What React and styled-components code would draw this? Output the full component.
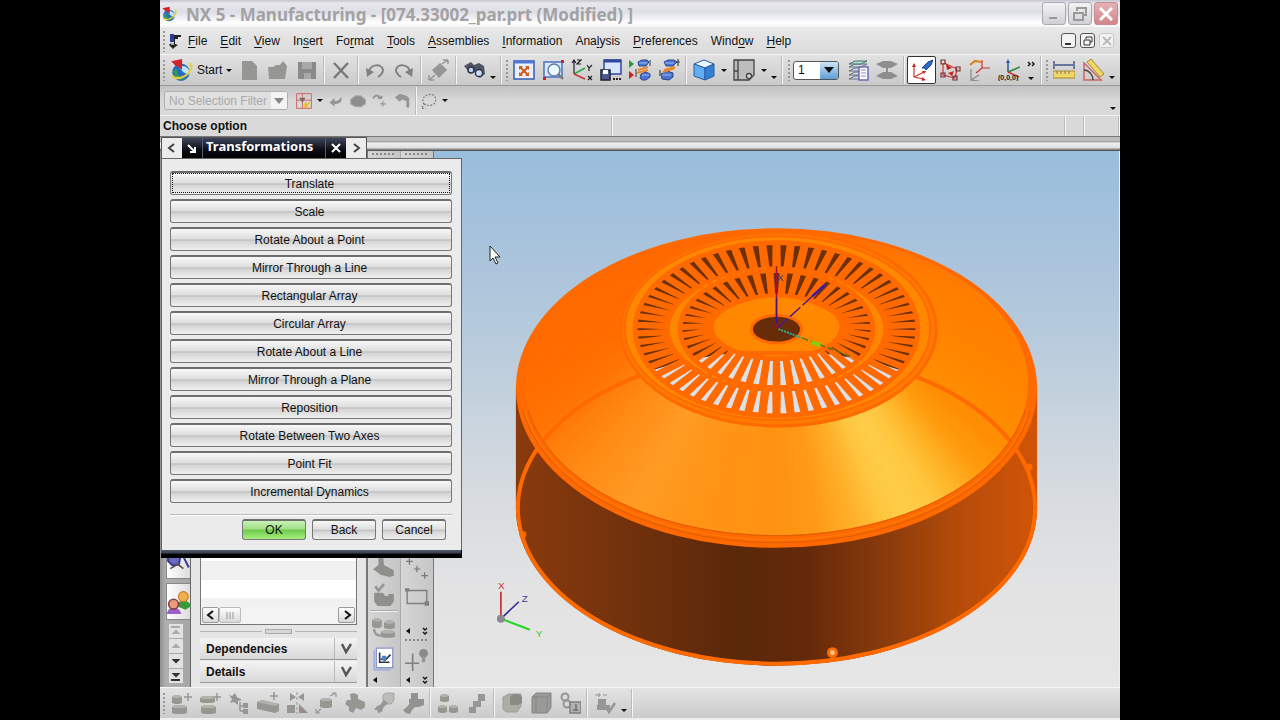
import React from "react";
import styled, { createGlobalStyle, css } from "styled-components";

const GlobalStyle = createGlobalStyle`
  * {
    box-sizing: border-box;
  }

  body {
    margin: 0;
    background: #000;
    font-family: "Liberation Sans", Arial, sans-serif;
    font-size: 12px;
    color: #111;
  }

  button, select {
    font: inherit;
    color: inherit;
    margin: 0;
    padding: 0;
    border: 0;
    background: none;
  }

  svg {
    display: block;
    flex: none;
  }
`;

const Screen = styled.div`
  display: flex;
  justify-content: center;
  height: 100vh;
`;

const Frame = styled.div`
  display: flex;
  flex-direction: column;
  width: 75%;
  background: #e2e2e2;
`;

const TitleBar = styled.header`
  display: flex;
  align-items: center;
  gap: 9px;
  height: 27px;
  padding: 0 2px 0 1px;
  background: linear-gradient(#c4c4d0, #e8e8ee 12%, #dedee6 45%, #fff 85%, #f4f4f6);
`;

const Title = styled.h1`
  flex: 1;
  margin: 0;
  padding-top: 2px;
  font: bold 17px/25px "Noto Sans", "Open Sans", sans-serif;
  color: #a2a2a4;
  white-space: nowrap;
`;

const WindowButtons = styled.div`
  display: flex;
  gap: ${(props) => (props.small ? "4px" : "2px")};
`;

const WindowButton = styled.button`
  display: flex;
  align-items: center;
  justify-content: center;
  width: 24px;
  height: 23px;
  border: 1px solid ${(props) => (props.close ? "#c98c90" : "#a9a9b0")};
  border-radius: 3px;
  color: ${(props) => (props.close ? "#fff" : "#9a9a9a")};
  background: ${(props) =>
    props.close
      ? "linear-gradient(#e3b3b4, #d0868a)"
      : "linear-gradient(#f4f4f6, #d0d0d6)"};
`;

const ChildButton = styled(WindowButton)`
  width: 15px;
  height: 15px;
  border-color: ${(props) => (props.disabled ? "#c8c8c8" : "#555")};
  color: ${(props) => (props.disabled ? "#b8b8b8" : "#333")};
  background: #f3f3f3;
`;

const MenuBar = styled.nav`
  display: flex;
  align-items: center;
  gap: 1px;
  height: 27px;
  padding: 0 6px 0 0;
  background: linear-gradient(#e9e9e9, #dadada);
`;

const MenuItem = styled.button`
  padding: 0 6px;
  line-height: 20px;
  text-underline-offset: 2px;
`;

const Spacer = styled.div`
  flex: 1;
`;

const ToolBar = styled.div`
  display: flex;
  align-items: center;
  height: 32px;
  border-top: 1px solid #f4f4f4;
  border-bottom: 1px solid #9a9a9a;
  background: linear-gradient(#e2e2e2, #c9c9c9);
`;

const Grip = styled.div`
  width: ${(props) => (props.wide ? "8px" : "6px")};
  height: 22px;
  background: radial-gradient(circle at 2px 2px, #999 1px, transparent 1px);
  background-size: 3px 4px;
  background-repeat: repeat-y;
  background-position: 2px 0;
`;

const Separator = styled.div`
  width: ${(props) => (props.narrow ? "5px" : "6px")};
  height: 28px;
  background: linear-gradient(90deg, #bbb 1px, #f6f6f6 1px) 2px 0 / 2px 100% no-repeat;
`;

const ToolButton = styled.button`
  display: flex;
  align-items: center;
  justify-content: center;
  width: 29px;
  height: 28px;
  ${(props) =>
    props.active &&
    css`
      border: 1px solid #333;
      border-radius: 2px;
      background: #fff;
    `}
`;

const StartButton = styled.button`
  display: flex;
  align-items: center;
  gap: 4px;
  width: 66px;
  padding-left: 1px;
`;

const CaretButton = styled.button`
  display: flex;
  align-items: ${(props) => (props.low ? "flex-end" : "center")};
  justify-content: center;
  width: ${(props) => (props.low ? "10px" : "11px")};
  height: ${(props) => (props.low ? "18px" : "28px")};
`;

const ChevronStack = styled.button`
  display: flex;
  flex-direction: column;
  align-items: center;
  gap: 9px;
  width: 15px;
`;

const Triangle = styled.span`
  border: 3px solid transparent;
  border-bottom-width: 0;
  border-top-color: #111;
`;

const LayerSelect = styled.label`
  display: flex;
  width: 46px;
  height: 19px;
  margin: 0 4px 0 2px;
  border: 1px solid #555;
  border-radius: 3px;
  background: #fff;
  overflow: hidden;

  select {
    flex: 1;
    min-width: 0;
    padding-left: 4px;
    appearance: none;
  }
`;

const SelectArrow = styled.span`
  display: flex;
  align-items: center;
  justify-content: center;
  width: 18px;
  background: linear-gradient(#cfe4f5, #5f9fd6);
`;

const FilterSelect = styled(LayerSelect)`
  width: 124px;
  margin: 0 6px 0 4px;
  border-color: #b0b0b0;
  color: #a9a9a9;
  background: #e0e0e0;

  select {
    color: #a9a9a9;
    opacity: 1;
  }

  ${SelectArrow} {
    width: 16px;
    color: #888;
    background: #f4f4f4;
  }
`;

const SelectionBar = styled.div`
  display: flex;
  align-items: center;
  height: 29px;
  padding-right: 2px;
  background: linear-gradient(#c2c2c2, #d8d8d8 50%, #dadada);
`;

const SmallTool = styled(ToolButton)`
  width: ${(props) => props.size || 22}px;
`;

const PromptLine = styled.div`
  display: flex;
  align-items: center;
  height: 21px;
  border-top: 1px solid #f0f0f0;
  background: #dadada;
  font-weight: bold;
`;

const PromptCell = styled.div`
  flex: ${(props) => props.grow || "none"};
  width: ${(props) => props.size || 0}px;
  height: 19px;
  padding-left: 3px;
  line-height: 18px;
  border-right: 1px solid #f8f8f8;
  box-shadow: inset -1px 0 #bbb;
`;

const Divider = styled.div`
  height: 15px;
  border-bottom: 1px solid #555;
  background: linear-gradient(
    #777 1px,
    #bcbcbc 1px,
    #bcbcbc 5px,
    #888 5px,
    #eee 7px,
    #e0e0e0 12px,
    #888 13px
  );
`;

const Workspace = styled.main`
  position: relative;
  display: flex;
  flex: 1;
  min-height: 0;
`;

const ResourceBar = styled.div`
  display: flex;
  flex-direction: column;
  justify-content: flex-end;
  width: 31px;
  padding: 0 0 4px 6px;
  border-right: 1px solid #666;
  background: linear-gradient(90deg, #909090, #b0b0b0 6px, #a6a6a6);
`;

const ResourceTab = styled.button`
  display: flex;
  align-items: center;
  justify-content: center;
  height: 37px;
  margin-bottom: 4px;
  border: 1px solid #888;
  border-right: 0;
  background: linear-gradient(90deg, #fff, #ddd);
`;

const TabScroll = styled.div`
  display: flex;
  flex-direction: column;
  gap: 1px;
  padding-left: 3px;
`;

const TabScrollButton = styled.button`
  display: flex;
  align-items: center;
  justify-content: center;
  width: 14px;
  height: 14px;
  background: #e2e2e2;
  color: ${(props) => (props.disabled ? "#aaa" : "#333")};
`;

const Navigator = styled.section`
  display: flex;
  flex-direction: column;
  justify-content: flex-end;
  width: 177px;
  padding: 0 9px 4px;
  border-right: 2px solid #777;
  background: #e6e6e6;
`;

const TreeBox = styled.div`
  display: flex;
  flex-direction: column;
  justify-content: flex-end;
  height: 120px;
  border: 1px solid #777;
  background: repeating-linear-gradient(#fff 0 18px, #f1f1f1 18px 37px);
`;

const ScrollBar = styled.div`
  display: flex;
  height: 18px;
  padding: 1px;
  background: #f3f3f3;
`;

const ScrollButton = styled.button`
  display: flex;
  align-items: center;
  justify-content: center;
  width: ${(props) => (props.thumb ? "22px" : "17px")};
  border: 1px solid ${(props) => (props.thumb ? "#bbb" : "#999")};
  border-radius: 2px;
  background: linear-gradient(#fff, #d8d8d8);
`;

const Splitter = styled.div`
  display: flex;
  align-items: center;
  height: 13px;

  &::before,
  &::after {
    content: "";
    flex: 1;
    height: 1px;
    background: #b4b4b4;
  }
`;

const SplitterHandle = styled.span`
  width: 27px;
  height: 5px;
  margin: 0 3px;
  border: 1px solid #aaa;
  background: #d6d6d6;
`;

const SectionButton = styled.button`
  display: flex;
  align-items: center;
  height: 22px;
  padding-left: 6px;
  border-bottom: 1px solid #999;
  font-weight: bold;
  background: linear-gradient(#f4f4f4, #d8d8d8);

  svg {
    width: 23px;
    margin-left: auto;
    border-left: 1px solid #bbb;
  }

  & + & {
    margin-top: 1px;
  }
`;

const SideTools = styled.div`
  display: flex;
  flex-direction: column;
  align-items: center;
  width: 33px;
  padding-bottom: 1px;
  border-right: 1px solid ${(props) => (props.last ? "#777" : "#aaa")};
  background: linear-gradient(90deg, #d6d6d6, #c6c6c6);
`;

const Dots = styled.div`
  width: 24px;
  height: 8px;
  background: radial-gradient(circle at 1px 1px, #888 1px, transparent 1px);
  background-size: 4px 3px;
  background-repeat: repeat-x;
  background-position: 0 2px;
`;

const SideButton = styled(ToolButton)`
  width: 30px;
  height: ${(props) => props.tall || 30}px;
`;

const SideRule = styled.div`
  width: 28px;
  height: 2px;
  border-top: 1px solid #aaa;
  background: #f4f4f4;
`;

const SideGap = styled.div`
  height: 14px;
`;

const SideFooter = styled.div`
  display: flex;
  align-items: center;
  justify-content: space-between;
  width: 22px;
  height: 12px;
`;

const Viewport = styled.section`
  flex: 1;
  min-width: 0;
  border-right: 1px solid #eee;
  background: linear-gradient(#99bedd, #a6c2dc 15%, #b4c9dc 32%, #c9d4de 50%, #d8dce0 65%, #e3e3e4 82%, #e6e6e6);

  svg {
    width: 100%;
    height: 100%;
  }
`;

const BottomBar = styled.div`
  display: flex;
  align-items: center;
  height: 33px;
  padding: 1px 0 2px;
  border-top: 1px solid #f6f6f6;
  border-bottom: 2px solid #efefef;
  background: linear-gradient(#e3e3e3, #cbcbcb);
`;

const Dialog = styled.form`
  position: absolute;
  top: -14px;
  left: 1px;
  width: 301px;
`;

const DialogTabs = styled.div`
  display: flex;
  width: 206px;
  height: 21px;
  border: 1px solid #555;
  border-bottom: 0;
  background: linear-gradient(#3e455c, #0a0c14 60%, #000);
`;

const DialogTitle = styled.h2`
  flex: 1;
  margin: 0;
  padding-left: 3px;
  border: solid #555b70;
  border-width: 0 1px;
  font: bold 13px/17px "Noto Sans", "Open Sans", sans-serif;
  color: #fff;
`;

const TabButton = styled.button`
  display: flex;
  align-items: center;
  justify-content: center;
  width: 20px;
  color: ${(props) => (props.light ? "#444" : "#fff")};
  background: ${(props) => (props.light ? "#ececec" : "none")};
`;

const DialogBody = styled.div`
  padding: 12px 9px 10px 8px;
  border: 1px solid #666;
  border-bottom: 0;
  background: #ebebeb;
`;

const DialogBase = styled.div`
  height: 8px;
  border-right: 1px solid #000;
  background: linear-gradient(#555b6b, #3c4252 35%, #000 55%);
`;

const OptionList = styled.div`
  display: flex;
  flex-direction: column;
  gap: 4px;
`;

const PushButton = styled.button`
  height: ${(props) => (props.compact ? "21px" : "24px")};
  ${(props) => props.compact && "width: 64px;"}
  padding-right: ${(props) => (props.compact ? "0" : "3px")};
  border: 1px solid #777;
  border-top: 2px solid #6e6e6e;
  border-radius: 3px;
  background: ${(props) =>
    props.primary
      ? "linear-gradient(#c9f2b8, #9fdf85 45%, #6cc94c 50%, #a5f07c)"
      : "linear-gradient(#f8f8f8, #dedede 46%, #c0c0c0 52%, #d6d6d6 60%, #efefef)"};
  ${(props) =>
    props.focused &&
    css`
      outline: 1px dotted #111;
      outline-offset: -3px;
    `}
`;

const Actions = styled.div`
  display: flex;
  justify-content: flex-end;
  gap: 6px;
  margin-top: 11px;
  padding: 4px 6px 0 0;
  border-top: 1px solid #bbb;
  box-shadow: inset 0 1px #fff;
`;

const Pointer = styled.svg`
  position: absolute;
  top: 94px;
  left: 329px;
`;

const GREY = "#969694";

const Icon = ({ size = 22, children }) => (
  <svg
    width={size}
    height={size}
    viewBox="0 0 22 22"
    fill="none"
    stroke={GREY}
    strokeWidth="1.5"
    aria-hidden="true"
  >
    {children}
  </svg>
);

const Block = ({ x, y, w = 9, h = 6 }) => (
  <g stroke="none">
    <path d={`M${x} ${y}l3-2h${w - 3}l3 2v${h}l-3 1h-${w - 3}l-3-1z`} fill="#979792" />
    <path d={`M${x} ${y}l3-2h${w - 3}l3 2-3 1h-${w - 3}z`} fill="#b2b2ae" />
  </g>
);

const Plus = ({ x, y }) => <path d={`M${x - 4} ${y}h8M${x} ${y - 4}v8`} strokeWidth="1.5" />;

const NxLogo = ({ size = 22 }) => (
  <Icon size={size}>
    <circle cx="11" cy="13" r="8" fill="#2a6db8" stroke="none" />
    <path d="M4 12c1 6 6 9 11 8-5-1-8-5-8-10z" fill="#2fa050" stroke="none" />
    <path d="M10 8c4-2 9 1 9 7-4 0-8-3-9-7z" fill="#bfe4fa" stroke="none" />
    <path d="M19 5c4 3-1 11-8 13-4 1-7 0-8-2" stroke="#e2cf3c" strokeWidth="2" />
    <path d="M2 3l10-2v10l-3-3-3-1z" fill="#d3222a" stroke="none" />
  </Icon>
);

const icons = {
  fresh: <path d="M4 2h10l5 5v14H4z" fill={GREY} stroke="none" />,
  open: <path d="M1 8h5l3-2h4l3-4 4 5-2 13H2z" fill={GREY} stroke="none" />,
  save: (
    <>
      <path d="M2 3h18v17H2z" fill="#8a8a8a" stroke="none" />
      <path d="M6 3h10v7H6zM8 14h7v6H8z" fill="#a9a9a9" stroke="none" />
    </>
  ),
  remove: <path d="M4 4l14 15M18 4L4 19" stroke="#777" strokeWidth="2.4" />,
  undo: (
    <>
      <path d="M5 13C6 5 18 4 19 11c0 3-2 5-5 7" stroke="#808080" strokeWidth="2" />
      <path d="M2 9l1 9 7-5z" fill="#808080" stroke="none" />
    </>
  ),
  redo: (
    <>
      <path d="M17 13C16 5 4 4 3 11c0 3 2 5 5 7" stroke="#808080" strokeWidth="2" />
      <path d="M20 9l-1 9-7-5z" fill="#808080" stroke="none" />
    </>
  ),
  transform: (
    <>
      <path d="M5 11l7-6 6 6-7 7z" fill={GREY} />
      <path d="M14 5l6-4m0 0h-5m5 0v4M7 16l-6 5m0 0v-5m0 5h5" />
    </>
  ),
  find: (
    <g stroke="#334">
      <path d="M1 7l7-4 3 3 5-2 5 3 1 8-5 4-5-6-5 1z" fill="#505666" stroke="none" />
      <circle cx="8" cy="11" r="3" fill="#b9d3f3" />
      <circle cx="16" cy="14" r="3.6" fill="#c9defa" />
    </g>
  ),
  fit: (
    <>
      <path d="M1 2h20v18H1z" fill="#e9f0ff" stroke="#3a5cb0" />
      <path d="M1 3h20" stroke="#4c78d8" strokeWidth="3" />
      <path d="M7 8l8 8M15 8l-8 8" stroke="#d35a12" strokeWidth="2" />
      <path d="M6 7h4L6 11zM16 7v4l-4-4zM6 17v-4l4 4zM16 17h-4l4-4z" fill="#d35a12" stroke="none" />
    </>
  ),
  zoom: (
    <>
      <path d="M2 3h18v15H2z" fill="#dfe9fb" stroke="#4a70c0" />
      <circle cx="12" cy="11" r="6" fill="#eef9ff" stroke="#5a7fb0" />
      <path d="M16 15l5 5" stroke="#777" strokeWidth="2.4" />
      <path d="M1 18h3v3H1zM19 1h3v3h-3z" fill="#c22" stroke="none" />
    </>
  ),
  orient: (
    <>
      <path d="M3 15V1M1 4l2-3 2 3" stroke="#223" strokeWidth="1.2" />
      <path d="M3 15l11-6" stroke="#3a4" />
      <path d="M3 15l11 5" stroke="#c33" />
      <path d="M6 1h4L6 5h4M16 6l2 3 3-3m-3 3v3M17 17l4 4m0-4l-4 4" stroke="#222" strokeWidth="1.2" />
    </>
  ),
  saveAs: (
    <>
      <path d="M4 1h17v14H4z" fill="#d7e6fb" stroke="#2c4a9c" />
      <path d="M4 2h17" stroke="#2c4a9c" strokeWidth="3" />
      <path d="M1 11h9v10H1z" fill="#4a5a90" stroke="#223" />
      <path d="M3 11h5v4H3z" fill="#fff" stroke="none" />
      <path d="M13 20h2m1 0h2m1 0h2" stroke="#222" strokeWidth="2" />
    </>
  ),
  replace: (
    <>
      <path d="M0 1l5 4-5 4z" fill="#2a9a3a" stroke="none" />
      <path d="M0 12l5 4-5 4z" fill="#c22" stroke="none" />
      <path d="M9 3l4-2h5l2 2-3 4h-7zM12 15l5-2 4 2v3l-4 3h-4l-2-2z" fill="#4a74cf" stroke="#2b4690" strokeWidth="1" />
      <path d="M10 4h8M13 16h7" stroke="#9dbcf5" strokeWidth="1" />
      <path d="M9 11l10-3M8 14l11-3" stroke="#e8862a" strokeWidth="2" />
      <path d="M7 10v8M21 1v6" stroke="#555" strokeWidth="1.2" />
    </>
  ),
  section: (
    <>
      <path d="M6 3l4-2h6l3 2-4 4H8zM3 15l6-3 6 2v4l-4 3-7-1z" fill="#4a74cf" stroke="#2b4690" strokeWidth="1" />
      <path d="M7 4h9M4 16h9" stroke="#9dbcf5" strokeWidth="1" />
      <path d="M6 11l11-3M5 13l12-4" stroke="#e8862a" strokeWidth="2" />
      <path d="M20 0v7m-2-4h4M2 11v6" stroke="#444" strokeWidth="1.2" />
    </>
  ),
  cube: (
    <g stroke="#2a5aa0" strokeWidth="1">
      <path d="M1 5l10-4 10 4-9 4z" fill="#eaf6ff" />
      <path d="M1 5l11 4v12L1 17z" fill="#62aef0" />
      <path d="M21 5l-9 4v12l9-4z" fill="#3180d2" />
    </g>
  ),
  sheet: (
    <g stroke="#444" strokeWidth="1.3">
      <path d="M1 1h20v15l-5 5H1zM5 1v20M1 12h4" fill="#bdbdbd" />
      <circle cx="16" cy="17" r="2.5" fill="#ddd" />
    </g>
  ),
  layers: (
    <>
      <path d="M2 8l6-3h12l-6 3zM2 12l6-3h12l-6 3zM2 16l6-3h12l-6 3zM2 20l6-3h12l-6 3z" fill="#d5dbe0" stroke="#607080" strokeWidth="1" />
      <path d="M2 5l6-3h12l-6 3z" fill="#aee0d2" stroke="#4a6a70" strokeWidth="1" />
      <path d="M12 8h9v13h-9z" fill="#fff" stroke="#6a6ab8" />
      <path d="M14 11h5m-5 3h5m-5 3h5" stroke="#88b" strokeWidth="1" />
    </>
  ),
  move: (
    <path d="M0 5l7-3h8l7 3-7 4h-3v4h3l7 4-7 3H7l-7-3 7-4h3V9H7z" fill="#8e8e8e" stroke="none" />
  ),
  wcsDynamics: (
    <>
      <path d="M3 18V7m0 11l10-5M3 18l9 2" stroke="#c33" strokeWidth="1.2" />
      <path d="M3 4l-2 4h4zM15 12l-4 0 2 3zM11 18v4l4-1z" fill="#c22" stroke="none" />
      <path d="M11 9l6-6 5-2-2 5-5 5-1-2z" fill="#2c6cc8" stroke="#1b3f86" strokeWidth="1" />
    </>
  ),
  wcsOrigin: (
    <>
      <path d="M3 4v12l12 3M4 4l13 6-2 9" stroke="#c33" strokeWidth="1.2" />
      <path d="M1 1h4v4H1zM1 14h4v4H1zM13 17h4v4h-4zM16 8h4v4h-4z" stroke="#733" strokeWidth="1.2" />
      <path d="M6 5l6 4-5 2zM8 14l6-2-2 5z" fill="#c22" stroke="none" />
    </>
  ),
  wcsRotate: (
    <>
      <path d="M1 6l5-4 6 1" stroke="#e08020" strokeWidth="2.2" />
      <path d="M13 1v8h8m-8 0l-6 5" stroke="#c33" strokeWidth="1.2" />
      <path d="M2 10v11l8-5m-8 5l8 1" stroke="#888" strokeWidth="1.2" />
    </>
  ),
  wcsSave: (
    <>
      <path d="M10 13V3" stroke="#245aa8" />
      <path d="M10 0l2 4H8z" fill="#245aa8" stroke="none" />
      <path d="M10 13l12-5" stroke="#2a8a3a" />
      <path d="M10 13l11 5" stroke="#c33" />
      <text x="0" y="21" fontSize="7" fontWeight="bold" fill="#222" stroke="none">
        (0,0,0)
      </text>
    </>
  ),
  distance: (
    <>
      <path d="M1 2v8M21 2v8M2 6h18" stroke="#44588c" />
      <path d="M0 12h22v7H0z" fill="#efd666" stroke="#a58a2a" strokeWidth="1" />
      <path d="M4 12v3m4-3v3m4-3v3m4-3v3" stroke="#876" strokeWidth="1" />
    </>
  ),
  angle: (
    <>
      <path d="M2 4v17h17z" stroke="#c66" />
      <path d="M2 11c5 0 9 5 9 10" stroke="#444" />
      <path d="M5 3l4-3 13 15-4 3z" fill="#efd666" stroke="#a58a2a" strokeWidth="1" />
    </>
  ),
  snap: (
    <>
      <path d="M2 2h18v18H2zM9 2v18M2 10h18" stroke="#c66" strokeWidth="1.2" />
      <path d="M5 7h8l-4 6z" fill="#866" stroke="none" />
      <path d="M12 12l3 2 4-4-2 5-3 5-3-1z" fill="#e8c020" stroke="none" />
    </>
  ),
  back: <path d="M18 5c3 7-2 10-9 10v4l-7-6 7-6v4c5 0 7-2 9-6z" fill={GREY} stroke="none" />,
  solid: <path d="M1 9l6-5h8l6 5v6l-6 4H8l-7-4z" fill="#8e8e8e" stroke="#a5a5a5" />,
  curveAdd: (
    <>
      <path d="M2 8c0-5 8-7 10 0m0 0l-4-2m4 2l2-4" strokeWidth="2.4" />
      <Plus x={15} y={15} />
    </>
  ),
  filterTool: <path d="M1 6l7-5 10 3 3 4v12h-4v-9l-6-2-3 3z" fill={GREY} stroke="none" />,
  lasso: <path d="M5 15C1 8 6 3 13 3c8 0 8 12 1 13-4 1-6 0-8-1-3 1-3 4-4 5h5" stroke="#777" strokeDasharray="2 2" />,
  blocks: (
    <>
      <Block x={2} y={5} w={7} />
      <Block x={2} y={15} w={12} />
      <Plus x={18} y={5} />
    </>
  ),
  blocksAlt: (
    <>
      <Block x={1} y={6} w={12} h={4} />
      <Block x={2} y={15} w={12} />
      <Plus x={18} y={5} />
    </>
  ),
  tree: (
    <>
      <path d="M1 3l3 1 3-3 2 4 5 3-4 1 0 4-4-3-4 1 2-4z" fill={GREY} stroke="none" />
      <path d="M12 10v9m0-5h5m-5 5h5" />
      <path d="M15 11h5v5h-5zM15 17h5v5h-5z" fill={GREY} stroke="none" />
    </>
  ),
  slab: (
    <>
      <path d="M0 10l5-2 17 4v7l-4 2-18-4z" fill="#979792" stroke="none" />
      <path d="M0 10l5-2 17 4-4 2z" fill="#b2b2ae" stroke="none" />
      <Plus x={17} y={4} />
    </>
  ),
  mirror: (
    <>
      <path d="M4 1l6 4-6 4zM18 1l-6 4 6 4zM1 13h8v8H1z" fill={GREY} stroke="none" />
      <path d="M13 12l9 9h-9z" fill="#9f8888" stroke="none" />
      <path d="M11 0v22" strokeWidth="1" strokeDasharray="3 2" />
    </>
  ),
  stretch: (
    <>
      <Block x={5} y={8} w={9} h={7} />
      <path d="M15 4l6-3m0 0h-4m4 0v4M6 17l-5 4m0 0v-4m0 4h4" strokeWidth="1.2" />
    </>
  ),
  cluster: (
    <path d="M6 2l4-1 4 2v4l7 3v5l-4 3-5-2-3 5-4-2v-4l-4-3 2-4h4z" fill="#979792" stroke="none" />
  ),
  link: (
    <>
      <path d="M10 3l3-2h8v7l-3 4h-8z" fill="#bcbcb8" stroke="#a5a5a5" strokeWidth="1" />
      <path d="M1 18l3-4 3-1 4-5 4 3-5 5-1 4-4 1-1-3z" fill={GREY} stroke="none" />
    </>
  ),
  linkAll: (
    <path d="M9 1h7v6h6v6l-5 2h-4l-3 3-2 4-4-1-3-3 4-3 3-4h-1V7h2z" fill="#92928e" stroke="none" />
  ),
  three: (
    <>
      <Block x={3} y={4} w={6} h={5} />
      <Block x={1} y={15} w={6} h={5} />
      <Block x={12} y={15} w={6} h={5} />
    </>
  ),
  steps: <path d="M12 2h7v7h-4v6h-5v6H3v-6h4V9h5z" fill={GREY} stroke="none" />,
  shade: (
    <>
      <path d="M2 5l6-3h12v12l-4 6H5l-3-3z" fill="#acaca8" stroke="#9c9c9c" strokeWidth="1" />
      <path d="M9 5l3-3h6l3 3v6l-4 2h-8z" fill="#8a8a86" stroke="none" />
    </>
  ),
  boxes: (
    <path d="M2 5l4-4h15v15l-4 5H2zM2 5h15v16M17 5l4-4M6 5v16" fill="#9a9a96" stroke="#858585" strokeWidth="1" />
  ),
  chain: (
    <>
      <circle cx="6" cy="5" r="3.5" strokeWidth="2" />
      <circle cx="8" cy="12" r="3.5" strokeWidth="2" />
      <path d="M11 10h11v11H11z" fill="#b0b0b0" stroke="#808080" />
      <path d="M14 18h5m-2-6v7" stroke="#707070" />
    </>
  ),
  verify: (
    <>
      <path d="M1 3h6m6 0H9M5 1v4" strokeWidth="1.2" />
      <path d="M4 7h8v6h4v5H3v-5h1z" fill={GREY} stroke="none" />
      <path d="M12 15l3 5 6-9" strokeWidth="2.5" />
    </>
  ),
  mill: <path d="M6 0h4l1 10 9 5v5l-4 1-8-2-7-5 5-4z" fill="#8f8f8b" stroke="none" />,
  millCheck: (
    <>
      <path d="M3 3l3 4 5-6" strokeWidth="2.4" />
      <path d="M2 9h8l2 3h3v-2h5v7l-3 4H5l-3-4z" fill="#8f8f8b" stroke="none" />
    </>
  ),
  route: (
    <>
      <Block x={0} y={4} w={6} h={6} />
      <Block x={11} y={6} w={7} h={5} />
      <path d="M2 12c0 4 2 6 6 6" strokeWidth="2" />
      <Block x={8} y={15} w={10} h={4} />
    </>
  ),
  report: (
    <>
      <path d="M4 1h15v18H4z" fill="#fff" stroke="#8a96c8" strokeWidth="1.2" />
      <path d="M2 3v18h15" stroke="#9aa6dc" strokeWidth="1.2" />
      <path d="M7 5v9h9M8 11l4 1 5-5" stroke="#334" />
      <path d="M9 8h4v4H9z" fill="#48c" stroke="none" />
    </>
  ),
  points: <path d="M1 4h6M4 1v6M8 11h6M11 8v6M15 17h6M18 14v6" stroke="#777" strokeWidth="1.1" />,
  rect: (
    <>
      <path d="M2 5h18v12H2z" stroke="#808080" strokeWidth="1.3" />
      <path d="M0 3h4v3H0zM18 15h4v4h-4z" fill="#808080" stroke="none" />
    </>
  ),
  light: (
    <>
      <path d="M7 5v16M0 14h13" stroke="#808080" />
      <circle cx="17" cy="5" r="4" fill="#8a8a8a" stroke="none" />
      <path d="M17 8v5" strokeWidth="3" />
    </>
  ),
  history: (
    <>
      <path d="M1 3h8l3 5-1 6-6 1-4-4zM12 1l8 16" fill="#6a6ac0" stroke="#3a3a90" strokeWidth="1.8" />
      <path d="M3 18l7-4 5 4" stroke="#555" />
    </>
  ),
  people: (
    <>
      <path d="M9 15c0-7 12-7 13 0l-5 3z" fill="#3a9a3a" stroke="none" />
      <circle cx="15" cy="6" r="4.5" fill="#f0b050" stroke="#c88020" strokeWidth="1" />
      <path d="M0 22c0-8 12-8 13 0z" fill="#9a60cc" stroke="none" />
      <circle cx="6" cy="13" r="4.5" fill="#e89a80" stroke="#8a4040" />
    </>
  ),
};

const Tool = ({ name, label, ...rest }) => (
  <ToolButton type="button" aria-label={label || name} {...rest}>
    <Icon>{icons[name]}</Icon>
  </ToolButton>
);

const Side = ({ name, tall }) => (
  <SideButton type="button" aria-label={name} tall={tall}>
    <Icon size={24}>{icons[name]}</Icon>
  </SideButton>
);

const Angle = ({ d = "M7 1L2 5l5 4", color = "currentColor" }) => (
  <svg width="10" height="10" viewBox="0 0 10 10" fill="none" stroke={color} strokeWidth="2" aria-hidden="true">
    <path d={d} />
  </svg>
);

const RIGHT = "M3 1l5 4-5 4";
const CROSS = "M1 1l8 8M9 1L1 9";
const RESTORE = "M3 3V1h6v5H7M1 4h6v5H1z";

const More = ({ double }) => (
  <SideFooter>
    <svg width="4" height="6" aria-hidden="true">
      <path d="M4 0v6L0 3z" fill="#111" />
    </svg>
    {double && (
      <svg width="6" height="9" fill="none" stroke="#111" strokeWidth="1.4" aria-hidden="true">
        <path d="M1 1l2 2 2-2M1 5l2 2 2-2" />
      </svg>
    )}
  </SideFooter>
);

// Part geometry, in the coordinates of the graphics window
const CX = 776;
const TOP = { y: 328, rx: 157, ry: 98 };
const RIM = { y: 383, rx: 252, ry: 152 };
const HOT = "#ff6a00";

const coneStops = [
  [0, 255, 132, 0],
  [26, 255, 142, 2],
  [36, 255, 156, 14],
  [44, 255, 180, 40],
  [51, 255, 198, 62],
  [58, 255, 205, 74],
  [64, 255, 198, 64],
  [72, 255, 174, 40],
  [80, 255, 154, 22],
  [90, 255, 146, 18],
  [108, 255, 148, 22],
  [124, 255, 156, 36],
  [145, 255, 136, 18],
  [162, 255, 116, 4],
  [180, 255, 108, 0],
  [270, 255, 104, 0],
  [300, 255, 116, 0],
  [325, 255, 126, 0],
  [360, 255, 132, 0],
];

const coneColor = (angle) => {
  const next = coneStops.findIndex((stop) => stop[0] > angle);
  const a = coneStops[next - 1];
  const b = coneStops[next];
  const t = (angle - a[0]) / (b[0] - a[0]);
  const mix = [1, 2, 3].map((i) => Math.round(a[i] + (b[i] - a[i]) * t));
  return `rgb(${mix.join(",")})`;
};

const onEllipse = (ring, degrees) => {
  const r = (degrees * Math.PI) / 180;
  const x = CX + ring.rx * Math.cos(r);
  const y = ring.y + ring.ry * Math.sin(r);
  return `${x.toFixed(1)},${y.toFixed(1)}`;
};

const coneFacets = Array.from({ length: 360 }, (_, a) => ({
  fill: coneColor(a),
  points: [
    onEllipse(TOP, a),
    onEllipse(TOP, a + 1.8),
    onEllipse(RIM, a + 1.8),
    onEllipse(RIM, a),
  ].join(" "),
}));

const makeSlots = (ring, inner, count, wide, slim) =>
  Array.from({ length: count }, (_, i) => {
    const a = ((i + 0.5) * 360) / count + 90;
    return [
      onEllipse(ring, a - wide),
      onEllipse(ring, a + wide),
      onEllipse(inner, a + slim),
      onEllipse(inner, a - slim),
    ].join(" ");
  });

const slots = [
  ...makeSlots({ y: 329, rx: 141, ry: 86 }, { y: 329, rx: 110, ry: 61 }, 62, 2, 1.6),
  ...makeSlots({ y: 329, rx: 96, ry: 58 }, { y: 327, rx: 66, ry: 32 }, 43, 2.9, 2.6),
];

const PartModel = () => (
  <svg viewBox="433 151 686 536" role="img" aria-label="Model view">
    <defs>
      <linearGradient id="wall">
        <stop offset="0" stopColor="#8a3a0c" />
        <stop offset="0.25" stopColor="#6e300c" />
        <stop offset="0.42" stopColor="#5a280a" />
        <stop offset="0.55" stopColor="#63290a" />
        <stop offset="0.72" stopColor="#8c3c0c" />
        <stop offset="0.86" stopColor="#b84c0a" />
        <stop offset="1" stopColor="#d05406" />
      </linearGradient>
      <clipPath id="floor">
        <ellipse cx={CX} cy="508" rx="259" ry="157" />
      </clipPath>
      <clipPath id="front">
        <path d="M500 410h550v150H500z" />
      </clipPath>
    </defs>
    <path d="M515 388v120a261 158 0 0 0 522 0V388z" fill="url(#wall)" />
    <ellipse cx={CX} cy="388" rx="261" ry="160" fill={HOT} />
    {coneFacets.map((facet) => (
      <polygon key={facet.points} points={facet.points} fill={facet.fill} />
    ))}
    <ellipse cx={CX} cy="508" rx="259" ry="156" fill="none" stroke={HOT} strokeWidth="4" />
    <g fill="none" clipPath="url(#front)">
      <ellipse cx={CX} cy="383" rx="253" ry="153" stroke="#dc5e04" strokeWidth="1" />
      <ellipse cx={CX} cy="385" rx="256" ry="155" stroke="#ff8008" strokeWidth="1" />
      <ellipse cx={CX} cy="386" rx="257" ry="157" stroke="#dc5c04" strokeWidth="1" />
    </g>
    <ellipse cx="778" cy="329" rx="158" ry="97" fill="#ff7a00" stroke={HOT} strokeWidth="3" />
    <ellipse cx="777" cy="328" rx="153" ry="92" fill="#ff8800" stroke={HOT} strokeWidth="2" />
    <ellipse cx={CX} cy="329" rx="77" ry="43" fill="none" stroke={HOT} strokeWidth="24" />
    <ellipse cx={CX} cy="329" rx="119" ry="70" fill="none" stroke={HOT} strokeWidth="24" />
    <g stroke={HOT} strokeWidth="6" strokeLinejoin="round">
      {slots.map((points) => (
        <polygon key={points} points={points} />
      ))}
    </g>
    <ellipse cx={CX} cy="329" rx="101" ry="61" fill="none" stroke="#ff8400" strokeWidth="2" strokeDasharray="6 4" />
    <g fill="#6e3008" stroke={HOT} strokeWidth="3.6" strokeLinejoin="round">
      {slots.map((points) => (
        <polygon key={points} points={points} />
      ))}
    </g>
    <g fill="#dde1e6" stroke={HOT} strokeWidth="3.6" strokeLinejoin="round" clipPath="url(#floor)">
      {slots.map((points) => (
        <polygon key={points} points={points} />
      ))}
    </g>
    <ellipse cx={CX} cy="325" rx="54" ry="28" fill="#ff8800" />
    <path d="M735 353h82" stroke={HOT} strokeWidth="4" />
    <ellipse cx={CX} cy="329" rx="25" ry="14" fill="#692c08" stroke={HOT} strokeWidth="3" />
    <path d="M776 328v-62" stroke="#a01030" strokeWidth="1.5" />
    <path d="M776 324v-26" stroke="#401090" strokeWidth="1.5" />
    <path d="M777 328l48-44" stroke="#4a1a90" strokeWidth="1.5" strokeDasharray="14 3" />
    <path d="M812 296l12-11" stroke="#3a18b0" strokeWidth="2.5" />
    <path d="M778 329l24 9" stroke="#30a890" strokeWidth="2" strokeDasharray="2 1" />
    <path d="M802 338l50 19" stroke="#5a7010" strokeWidth="1.5" strokeDasharray="6 3" />
    <path d="M811 342l9 3" stroke="#80d010" strokeWidth="4" />
    <text x="777" y="281" fontSize="9" fill="#304090">X</text>
    <g fill="none" stroke={HOT}>
      <circle cx="832" cy="653" r="4" fill="#ffc090" strokeWidth="3" />
      <circle cx="522" cy="535" r="2" fill={HOT} strokeWidth="3" />
      <circle cx="1029" cy="467" r="2" fill={HOT} strokeWidth="3" />
    </g>
    <path d="M500 619v-27" stroke="#c01818" strokeWidth="1.5" />
    <path d="M500 619l18-17" stroke="#2a2090" strokeWidth="1.5" />
    <path d="M500 619l29 11" stroke="#28d828" strokeWidth="2" />
    <circle cx="500" cy="619" r="4" fill="#8c8890" />
    <text x="497" y="589" fontSize="10" fill="#d03030">X</text>
    <text x="521" y="602" fontSize="10" fill="#4038a0">Z</text>
    <text x="535" y="637" fontSize="10" fill="#38c838">Y</text>
  </svg>
);

const menus = [
  ["", "F", "ile"],
  ["", "E", "dit"],
  ["", "V", "iew"],
  ["In", "s", "ert"],
  ["Fo", "r", "mat"],
  ["", "T", "ools"],
  ["", "A", "ssemblies"],
  ["", "I", "nformation"],
  ["Ana", "l", "ysis"],
  ["", "P", "references"],
  ["Wind", "o", "w"],
  ["", "H", "elp"],
];

const options = [
  "Translate",
  "Scale",
  "Rotate About a Point",
  "Mirror Through a Line",
  "Rectangular Array",
  "Circular Array",
  "Rotate About a Line",
  "Mirror Through a Plane",
  "Reposition",
  "Rotate Between Two Axes",
  "Point Fit",
  "Incremental Dynamics",
];

const TransformDialog = () => (
  <Dialog onSubmit={(e) => e.preventDefault()}>
    <DialogTabs>
      <TabButton type="button" light aria-label="Previous">
        <Angle />
      </TabButton>
      <TabButton type="button" aria-label="Pin">
        <Angle d="M1 2l6 6M8 4v5H3" />
      </TabButton>
      <DialogTitle>Transformations</DialogTitle>
      <TabButton type="button" aria-label="Close">
        <Angle d={CROSS} />
      </TabButton>
      <TabButton type="button" light aria-label="Next">
        <Angle d={RIGHT} />
      </TabButton>
    </DialogTabs>
    <DialogBody>
      <OptionList>
        {options.map((option, index) => (
          <PushButton key={option} type="button" focused={index === 0}>
            {option}
          </PushButton>
        ))}
      </OptionList>
      <Actions>
        <PushButton compact primary>OK</PushButton>
        <PushButton compact type="button">Back</PushButton>
        <PushButton compact type="button">Cancel</PushButton>
      </Actions>
    </DialogBody>
    <DialogBase />
  </Dialog>
);

const App = () => (
  <Screen>
    <GlobalStyle />
    <Frame>
      <TitleBar>
        <NxLogo size={16} />
        <Title>NX 5 - Manufacturing - [074.33002_par.prt (Modified) ]</Title>
        <WindowButtons>
          <WindowButton aria-label="Minimize">
            <Angle d="M0 9h8" />
          </WindowButton>
          <WindowButton aria-label="Restore">
            <svg width="14" height="14" fill="none" stroke="currentColor" strokeWidth="2">
              <path d="M4 4V1h9v7h-3M1 6h9v7H1z" />
            </svg>
          </WindowButton>
          <WindowButton close aria-label="Close">
            <svg width="14" height="14" stroke="currentColor" strokeWidth="3">
              <path d="M1 1l12 12M13 1L1 13" />
            </svg>
          </WindowButton>
        </WindowButtons>
      </TitleBar>

      <MenuBar>
        <Grip wide />
        <svg width="12" height="16" aria-hidden="true">
          <path d="M1 1h4v8H1z" fill="#2c3c9c" />
          <path d="M5 2h7v2H9v2H6v5l3 1-3 2-2 2-2-2-2-2 2-2h3z" fill="#222" />
          <path d="M2 10h3v2H2z" fill="#aaa" />
        </svg>
        {menus.map(([before, key, after]) => (
          <MenuItem key={before + key + after}>
            {before}
            <u>{key}</u>
            {after}
          </MenuItem>
        ))}
        <Spacer />
        <WindowButtons small>
          <ChildButton aria-label="Minimize document">
            <Angle d="M1 8h6" />
          </ChildButton>
          <ChildButton aria-label="Restore document">
            <svg width="10" height="10" fill="none" stroke="currentColor">
              <path d={RESTORE} />
            </svg>
          </ChildButton>
          <ChildButton disabled aria-label="Close document">
            <Angle d={CROSS} />
          </ChildButton>
        </WindowButtons>
      </MenuBar>

      <ToolBar>
        <Grip wide />
        <StartButton>
          <NxLogo size={24} />
          Start
          <Triangle />
        </StartButton>
        <Tool name="fresh" />
        <Tool name="open" />
        <Tool name="save" />
        <Separator narrow />
        <Tool name="remove" />
        <Separator narrow />
        <Tool name="undo" />
        <Tool name="redo" />
        <Separator />
        <Tool name="transform" />
        <Separator />
        <Tool name="find" />
        <CaretButton low aria-label="More standard tools">
          <Triangle />
        </CaretButton>
        <Separator narrow />
        <Grip />
        <Tool name="fit" />
        <Tool name="zoom" />
        <Tool name="orient" />
        <Tool name="saveAs" />
        <Tool name="replace" />
        <Tool name="section" />
        <Separator />
        <Tool name="cube" />
        <CaretButton aria-label="Shading styles">
          <Triangle />
        </CaretButton>
        <Tool name="sheet" />
        <CaretButton aria-label="Sheet styles">
          <Triangle />
        </CaretButton>
        <CaretButton low aria-label="More view tools">
          <Triangle />
        </CaretButton>
        <Separator />
        <Grip />
        <LayerSelect>
          <select aria-label="Work layer" defaultValue="1">
            <option>1</option>
          </select>
          <SelectArrow>
            <svg width="10" height="6" aria-hidden="true">
              <path d="M0 0h10L5 6z" fill="#111" />
            </svg>
          </SelectArrow>
        </LayerSelect>
        <Tool name="layers" />
        <Tool name="move" />
        <Separator />
        <Tool name="wcsDynamics" active />
        <Tool name="wcsOrigin" />
        <Tool name="wcsRotate" />
        <Tool name="wcsSave" />
        <ChevronStack aria-label="More utility tools">
          <svg width="8" height="7" fill="none" stroke="#111" strokeWidth="1.4">
            <path d="M1 1l2 2-2 2M5 1l2 2-2 2" />
          </svg>
          <Triangle />
        </ChevronStack>
        <Separator narrow />
        <Grip />
        <Tool name="distance" />
        <Tool name="angle" />
        <CaretButton low aria-label="More measure tools">
          <Triangle />
        </CaretButton>
      </ToolBar>

      <SelectionBar>
        <FilterSelect>
          <select aria-label="Selection filter" disabled>
            <option>No Selection Filter</option>
          </select>
          <SelectArrow>
            <svg width="10" height="6" aria-hidden="true">
              <path d="M0 0h10L5 6z" fill="currentColor" />
            </svg>
          </SelectArrow>
        </FilterSelect>
        <SmallTool size={20} aria-label="Snap">
          <Icon size={18}>{icons.snap}</Icon>
        </SmallTool>
        <CaretButton aria-label="Snap options">
          <Triangle />
        </CaretButton>
        {["back", "solid", "curveAdd", "filterTool"].map((name) => (
          <SmallTool key={name} aria-label={name}>
            <Icon size={16}>{icons[name]}</Icon>
          </SmallTool>
        ))}
        <Separator />
        <SmallTool size={20} aria-label="Lasso">
          <Icon size={18}>{icons.lasso}</Icon>
        </SmallTool>
        <CaretButton aria-label="Lasso options">
          <Triangle />
        </CaretButton>
        <Spacer />
        <CaretButton low aria-label="More selection tools">
          <Triangle />
        </CaretButton>
      </SelectionBar>

      <PromptLine>
        <PromptCell grow="453">Choose option</PromptCell>
        <PromptCell grow="453" />
        <PromptCell size={19} />
        <PromptCell size={35} />
      </PromptLine>
      <Divider />

      <Workspace>
        <ResourceBar>
          <ResourceTab aria-label="History">
            <Icon size={24}>{icons.history}</Icon>
          </ResourceTab>
          <ResourceTab aria-label="Roles">
            <Icon size={24}>{icons.people}</Icon>
          </ResourceTab>
          <TabScroll>
            <TabScrollButton disabled aria-label="First tab">
              <Angle d="M0 1h9M3 7l2-2 2 2z" />
            </TabScrollButton>
            <TabScrollButton disabled aria-label="Previous tab">
              <Angle d="M3 6l2-2 2 2z" />
            </TabScrollButton>
            <TabScrollButton aria-label="Next tab">
              <Angle d="M3 4l2 2 2-2z" />
            </TabScrollButton>
            <TabScrollButton aria-label="Last tab">
              <Angle d="M0 9h9M3 3l2 2 2-2z" />
            </TabScrollButton>
          </TabScroll>
        </ResourceBar>

        <Navigator>
          <TreeBox>
            <ScrollBar>
              <ScrollButton aria-label="Scroll left">
                <Angle />
              </ScrollButton>
              <ScrollButton thumb aria-label="Scroll thumb">
                <svg width="8" height="7" stroke="#999">
                  <path d="M1 0v7M4 0v7M7 0v7" />
                </svg>
              </ScrollButton>
              <Spacer />
              <ScrollButton aria-label="Scroll right">
                <Angle d={RIGHT} />
              </ScrollButton>
            </ScrollBar>
          </TreeBox>
          <Splitter>
            <SplitterHandle />
          </Splitter>
          {["Dependencies", "Details"].map((name) => (
            <SectionButton key={name}>
              {name}
              <svg width="23" height="21" fill="none" stroke="#555" strokeWidth="2.4">
                <path d="M7 6l4 8 5-8" />
              </svg>
            </SectionButton>
          ))}
        </Navigator>

        <SideTools>
          <Dots />
          <Spacer />
          <Side name="mill" tall={28} />
          <Side name="millCheck" />
          <SideRule />
          <Side name="route" tall={32} />
          <Side name="report" />
          <More />
        </SideTools>
        <SideTools last>
          <Dots />
          <Spacer />
          <Side name="points" tall={28} />
          <Side name="rect" tall={28} />
          <SideGap />
          <More double />
          <Dots />
          <Side name="light" tall={29} />
          <More double />
        </SideTools>

        <Viewport>
          <PartModel />
        </Viewport>

        <TransformDialog />
        <Pointer width="12" height="20" viewBox="0 0 12 20" aria-hidden="true">
          <path d="M1 1v15l3-3 3 6 2-1-3-6h5z" fill="#fff" stroke="#222" />
        </Pointer>
      </Workspace>

      <BottomBar>
        <Grip />
        {["blocks", "blocksAlt", "tree", "slab", "mirror", "stretch", "cluster", "link", "linkAll"].map((name) => (
          <Tool key={name} name={name} />
        ))}
        <Separator />
        <Tool name="three" />
        <Tool name="steps" />
        <Separator />
        <Tool name="shade" />
        <Tool name="boxes" />
        <Tool name="chain" />
        <Separator />
        <Tool name="verify" />
        <CaretButton low aria-label="More assembly tools">
          <Triangle />
        </CaretButton>
        <Separator />
      </BottomBar>
    </Frame>
  </Screen>
);

export default App;
